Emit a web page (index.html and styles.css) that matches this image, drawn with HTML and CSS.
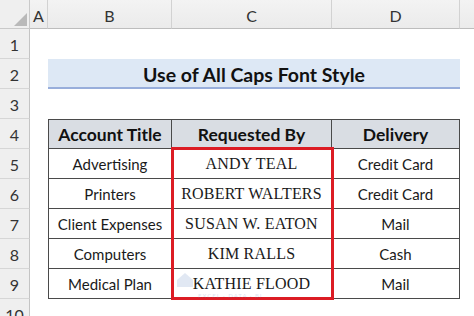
FILE: index.html
```html
<!DOCTYPE html>
<html>
<head>
<meta charset="utf-8">
<link rel="stylesheet" href="styles.css">
</head>
<body>
<div class="sheet">
  <div class="corner"><svg width="30" height="29" viewBox="0 0 30 29"><polygon points="27,13 27,26 14,26" fill="#b9b9b9"/></svg></div>
  <div class="ch">A</div>
  <div class="ch">B</div>
  <div class="ch">C</div>
  <div class="ch">D</div>
  <div class="ch last"></div>

  <div class="rh">1</div>
  <div class="blank span5"></div>

  <div class="rh">2</div>
  <div class="blank"></div>
  <div class="title span3">Use of All Caps Font Style</div>
  <div class="blank"></div>

  <div class="rh">3</div>
  <div class="blank span5"></div>

  <div class="rh">4</div>
  <div class="blank"></div>
  <div class="cell head first">Account Title</div>
  <div class="cell head">Requested By</div>
  <div class="cell head lastc">Delivery</div>
  <div class="blank"></div>

  <div class="rh">5</div>
  <div class="blank"></div>
  <div class="cell first">Advertising</div>
  <div class="cell name">ANDY TEAL</div>
  <div class="cell lastc">Credit Card</div>
  <div class="blank"></div>

  <div class="rh">6</div>
  <div class="blank"></div>
  <div class="cell first">Printers</div>
  <div class="cell name">ROBERT WALTERS</div>
  <div class="cell lastc">Credit Card</div>
  <div class="blank"></div>

  <div class="rh">7</div>
  <div class="blank"></div>
  <div class="cell first">Client Expenses</div>
  <div class="cell name">SUSAN W. EATON</div>
  <div class="cell lastc">Mail</div>
  <div class="blank"></div>

  <div class="rh">8</div>
  <div class="blank"></div>
  <div class="cell first">Computers</div>
  <div class="cell name">KIM RALLS</div>
  <div class="cell lastc">Cash</div>
  <div class="blank"></div>

  <div class="rh">9</div>
  <div class="blank"></div>
  <div class="cell first">Medical Plan</div>
  <div class="cell name">KATHIE FLOOD</div>
  <div class="cell lastc">Mail</div>
  <div class="blank"></div>

  <div class="rh">10</div>
  <div class="blank span5"></div>

  <div class="highlight"></div>
  <div class="watermark">
    <svg class="wm-icon" width="18" height="16" viewBox="0 0 18 16"><path d="M1 8 L9 1 L17 8 L17 15 L1 15 Z" fill="#6d8fc7"/></svg>
    <span class="wm-sub">EXCEL · DATA · BI</span>
  </div>
</div>
</body>
</html>
```
FILE: styles.css
```css
html, body {
  margin: 0;
  padding: 0;
  background: #ffffff;
  overflow: hidden;
}

.sheet {
  position: relative;
  display: grid;
  grid-template-columns: 30px 18px 124px 160px 128px 14px;
  grid-template-rows: 29px repeat(10, 30px);
  width: 474px;
  font-family: Lato, "Liberation Sans", sans-serif;
  color: #1a1a1a;
}

.corner {
  background: #efefef;
  border-right: 1px solid #c9c9c9;
  border-bottom: 1px solid #c9c9c9;
  box-sizing: border-box;
}
.corner svg { display: block; }

.ch {
  background: linear-gradient(#f3f3f3, #ebebeb);
  border-right: 1px solid #d2d2d2;
  border-bottom: 1px solid #bdbdbd;
  box-sizing: border-box;
  display: flex;
  align-items: center;
  justify-content: center;
  font-size: 16px;
  color: #333;
  padding-top: 2px;
}
.ch.last { border-right: none; }

.rh {
  grid-column: 1;
  background: #efefef;
  border-right: 1px solid #c4c4c4;
  border-bottom: 1px solid #d6d6d6;
  box-sizing: border-box;
  display: flex;
  align-items: center;
  justify-content: center;
  font-size: 16px;
  color: #333;
  padding-top: 2px;
}

.blank { background: #fff; }
.span5 { grid-column: span 5; }
.span3 { grid-column: span 3; }

.title {
  background: #dde8f5;
  border-bottom: 2px solid #98aedb;
  box-sizing: border-box;
  display: flex;
  align-items: center;
  justify-content: center;
  font-weight: 700;
  font-size: 19.5px;
  color: #111;
  padding-top: 2px;
}

.cell {
  box-sizing: border-box;
  border-right: 1px solid #4a4a4a;
  border-bottom: 1px solid #4a4a4a;
  display: flex;
  align-items: center;
  justify-content: center;
  font-size: 15px;
  color: #1a1a1a;
  white-space: nowrap;
}
.cell.first { border-left: 1px solid #4a4a4a; }
.cell.head {
  border-top: 1px solid #4a4a4a;
  background: #d9dde3;
  font-weight: 700;
  font-size: 17.5px;
  color: #111;
}
.cell.name {
  font-family: "Liberation Serif", "DejaVu Serif", serif;
  font-size: 16px;
  letter-spacing: 0.2px;
  color: #1a1a1a;
}

.highlight {
  position: absolute;
  left: 171px;
  top: 147px;
  width: 163px;
  height: 153px;
  border: 3px solid #dc1c24;
  box-sizing: border-box;
}

.watermark {
  position: absolute;
  left: 176px;
  top: 272px;
  display: flex;
  flex-direction: column;
  align-items: flex-start;
  gap: 5px;
  opacity: 0.2;
  color: #5a7bb8;
  font-family: Lato, sans-serif;
}
.wm-icon { display: block; }
.wm-sub { font-size: 6px; letter-spacing: 1px; line-height: 6px; padding-left: 22px; }
```
